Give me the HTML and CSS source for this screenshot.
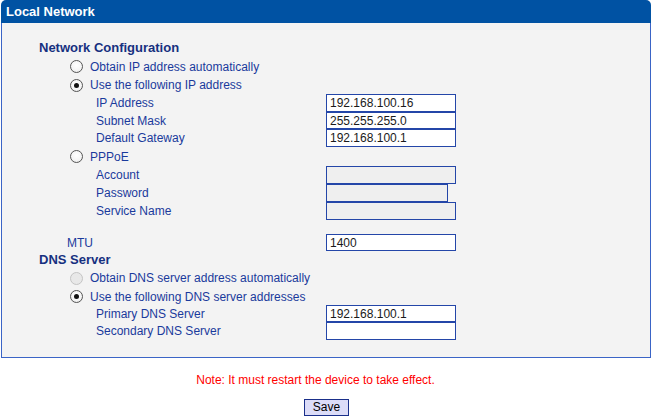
FILE: index.html
```html
<!DOCTYPE html>
<html>
<head>
<meta charset="utf-8">
<link rel="stylesheet" href="styles.css">
</head>
<body>
<div class="panel">
  <div class="panel-head">Local Network</div>
  <div class="panel-body">
    <div class="form">
      <div class="row h19"><div class="lbl heading">Network Configuration</div><div></div></div>
      <div class="row h19"><div class="lbl opt"><span class="radio"></span>Obtain IP address automatically</div><div></div></div>
      <div class="row h18"><div class="lbl opt"><span class="radio checked"></span>Use the following IP address</div><div></div></div>
      <div class="row h18"><div class="lbl sub">IP Address</div><div class="field"><span class="input">192.168.100.16</span></div></div>
      <div class="row h17"><div class="lbl sub">Subnet Mask</div><div class="field"><span class="input">255.255.255.0</span></div></div>
      <div class="row h18"><div class="lbl sub">Default Gateway</div><div class="field"><span class="input">192.168.100.1</span></div></div>
      <div class="row h19"><div class="lbl opt"><span class="radio"></span>PPPoE</div><div></div></div>
      <div class="row h18"><div class="lbl sub">Account</div><div class="field"><span class="input disabled"></span></div></div>
      <div class="row h18"><div class="lbl sub">Password</div><div class="field"><span class="input disabled short"></span></div></div>
      <div class="row h18"><div class="lbl sub">Service Name</div><div class="field"><span class="input disabled"></span></div></div>
      <div class="row h14"><div></div><div></div></div>
      <div class="row h17"><div class="lbl mtu">MTU</div><div class="field"><span class="input">1400</span></div></div>
      <div class="row h17"><div class="lbl heading">DNS Server</div><div></div></div>
      <div class="row h20"><div class="lbl opt"><span class="radio disabled"></span>Obtain DNS server address automatically</div><div></div></div>
      <div class="row h17"><div class="lbl opt"><span class="radio checked"></span>Use the following DNS server addresses</div><div></div></div>
      <div class="row h17"><div class="lbl sub">Primary DNS Server</div><div class="field"><span class="input">192.168.100.1</span></div></div>
      <div class="row h18"><div class="lbl sub">Secondary DNS Server</div><div class="field"><span class="input"></span></div></div>
    </div>
  </div>
</div>
<div class="note">Note: It must restart the device to take effect.</div>
<div class="actions"><button class="save" type="button">Save</button></div>
</body>
</html>
```

FILE: styles.css
```css
html, body {
  margin: 0;
  padding: 0;
  background: #ffffff;
  font-family: "Liberation Sans", Arial, sans-serif;
}

.panel {
  width: 650px;
  margin-left: 1px;
}

.panel-head {
  height: 23px;
  background: #0052a3;
  color: #ffffff;
  font-weight: bold;
  font-size: 13px;
  line-height: 23px;
  padding-left: 5px;
  border-radius: 5px 5px 0 0;
  box-sizing: border-box;
}

.panel-body {
  background: #f3f3f3;
  border: 1px solid #3a64c6;
  border-top: none;
  padding: 15px 0 17px 0;
}

.form {
  display: flex;
  flex-direction: column;
}

.row {
  display: grid;
  grid-template-columns: 324px 1fr;
  align-items: center;
}

.h14 { height: 14px; }
.h17 { height: 17px; }
.h18 { height: 18px; }
.h19 { height: 19px; }
.h20 { height: 20px; }

.lbl {
  font-size: 12px;
  color: #1a3a9c;
  white-space: nowrap;
  display: flex;
  align-items: center;
}

.heading {
  padding-left: 37px;
  font-size: 13px;
  font-weight: bold;
  color: #163080;
}

.opt {
  padding-left: 68px;
}

.sub {
  padding-left: 94px;
}

.mtu {
  padding-left: 65px;
}

.radio {
  width: 13px;
  height: 13px;
  box-sizing: border-box;
  border-radius: 50%;
  border: 1px solid #555555;
  background: radial-gradient(circle at 50% 40%, #ffffff 0%, #f4f4f4 60%, #e2e2e2 100%);
  margin-right: 7px;
  display: inline-flex;
  align-items: center;
  justify-content: center;
  flex: none;
}

.radio.checked::after {
  content: "";
  width: 5px;
  height: 5px;
  border-radius: 50%;
  background: #111111;
}

.radio.disabled {
  border-color: #c4c4c4;
  background: #e8e8e8;
}

.field {
  height: 100%;
  display: flex;
}

.input {
  width: 130px;
  height: 100%;
  box-sizing: border-box;
  border: 1px solid #2446a8;
  background: #ffffff;
  font-size: 12px;
  color: #1a1a1a;
  padding-left: 3px;
  display: flex;
  align-items: center;
}

.input.disabled {
  background: #efefef;
}

.input.short {
  width: 122px;
}

.note {
  text-align: center;
  color: #ff0000;
  font-size: 12px;
  margin-top: 15px;
  padding-right: 21px;
  height: 14px;
  line-height: 14px;
}

.actions {
  display: flex;
  justify-content: center;
  margin-top: 12px;
}

.save {
  width: 45px;
  height: 17px;
  box-sizing: border-box;
  border: 1px solid #1a2f8a;
  background: #dcdcf8;
  font-family: "Liberation Sans", Arial, sans-serif;
  font-size: 12px;
  color: #000000;
  padding: 0;
  margin-left: 1px;
  line-height: 15px;
}
```
